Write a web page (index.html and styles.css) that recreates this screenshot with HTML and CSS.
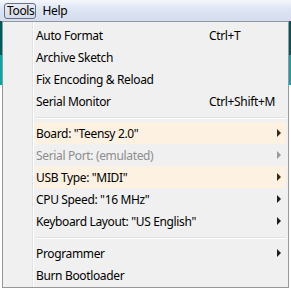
FILE: index.html
```html
<!DOCTYPE html>
<html>
<head>
    <meta charset="UTF-8">
    <link rel="stylesheet" href="styles.css">
</head>
<body>
    <div class="menubar">
        <span class="menubar-item active">Tools</span>
        <span class="menubar-item">Help</span>
    </div>

    <div class="editor">
        <div class="toolbar"></div>
        <div class="header"></div>
    </div>

    <div class="menu">
        <div class="item"><span class="label">Auto Format</span><span class="key">Ctrl+T</span></div>
        <div class="item"><span class="label">Archive Sketch</span></div>
        <div class="item"><span class="label">Fix Encoding &amp; Reload</span></div>
        <div class="item"><span class="label">Serial Monitor</span><span class="key">Ctrl+Shift+M</span></div>
        <div class="sep"></div>
        <div class="item hot"><span class="label">Board: "Teensy 2.0"</span><span class="arrow"></span></div>
        <div class="item disabled"><span class="label">Serial Port: (emulated)</span><span class="arrow"></span></div>
        <div class="item hot"><span class="label">USB Type: "MIDI"</span><span class="arrow"></span></div>
        <div class="item"><span class="label">CPU Speed: "16 MHz"</span><span class="arrow"></span></div>
        <div class="item"><span class="label">Keyboard Layout: "US English"</span><span class="arrow"></span></div>
        <div class="sep"></div>
        <div class="item"><span class="label">Programmer</span><span class="arrow"></span></div>
        <div class="item"><span class="label">Burn Bootloader</span></div>
    </div>
</body>
</html>
```

FILE: styles.css
```css
body {
    margin: 0;
    background-color: #fff;
    font-family: "Noto Sans", sans-serif;
    font-size: 12px;
    letter-spacing: -0.35px;
    color: #000;
    width: 291px;
    height: 291px;
    overflow: hidden;
}
.menubar {
    height: 21px;
    display: flex;
    align-items: flex-start;
    padding: 3px 0 0 4px;
    background: linear-gradient(#f3f6fb, #dde5f4 45%, #d4ddef);
    box-sizing: border-box;
}
.menubar-item {
    padding: 0 1px 0 2px;
    height: 16px;
    line-height: 14px;
    box-sizing: border-box;
    border: 1px solid transparent;
    margin-right: 3px;
}
.menubar-item.active {
    border-color: #66717f;
    border-radius: 3px;
    background: linear-gradient(#e8ecf3, #d5dce8);
}
.toolbar {
    height: 34px;
    background-color: #00585c;
}
.header {
    height: 30px;
    background-color: #17a1a5;
}
.menu {
    position: absolute;
    left: 2px;
    top: 21px;
    width: 287px;
    box-sizing: border-box;
    border: 1px solid #979797;
    background-color: #f0f0f0;
    padding: 2px 2px 1px 2px;
    background-image: linear-gradient(90deg, transparent 29px, #e2e3e3 29px, #e2e3e3 30px, #fff 30px, #fff 31px, transparent 31px);
}
.item {
    height: 22px;
    display: flex;
    align-items: center;
    padding-left: 31px;
    padding-right: 5px;
}
.item.hot {
    background: linear-gradient(90deg, transparent 29px, #fdf1e1 29px);
}
.label {
    flex: 1;
}
.key {
    width: 72px;
}
.disabled {
    color: #8d8d8d;
}
.arrow {
    width: 0;
    height: 0;
    border-top: 4px solid transparent;
    border-bottom: 4px solid transparent;
    border-left: 4px solid #1e1e1e;
}
.hot .arrow {
    border-left-color: #3a2810;
}
.disabled .arrow {
    border-left-color: #9a9a9a;
}
.sep {
    height: 10px;
    margin-left: 31px;
    background: linear-gradient(transparent 5px, #e0e0e0 5px, #e0e0e0 6px, #fff 6px, #fff 7px, transparent 7px);
}
```
